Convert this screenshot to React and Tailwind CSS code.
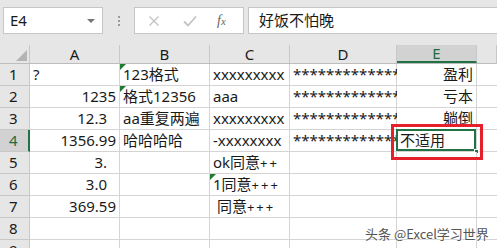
import React from "react";

const F = { fontFamily: '"Noto Sans", "Noto Sans CJK SC", sans-serif' };
const widths = [30, 90, 90, 80, 107, 80, 20];

function Tri() {
  return <div className="absolute left-0 top-0 w-0 h-0 border-t-[6px] border-r-[6px] border-t-[#1e7b34] border-r-transparent" />;
}

function Plus({ n }) {
  return <span className="tracking-[2px] text-[13px]">{"+".repeat(n)}</span>;
}

const rows = [
  [{ t: "?", a: "l" }, { t: "123格式", a: "l", tri: true }, { t: "xxxxxxxxx", a: "l" }, { t: "**************", a: "l" }, { t: "盈利", a: "r" }],
  [{ t: "1235", a: "r" }, { t: "格式12356", a: "l", tri: true }, { t: "aaa", a: "l" }, { t: "**************", a: "l" }, { t: "亏本", a: "r" }],
  [{ t: "12.3", a: "r2" }, { t: "aa重复两遍", a: "l" }, { t: "xxxxxxxxx", a: "l" }, { t: "**************", a: "l" }, { t: "躺倒", a: "r" }],
  [{ t: "1356.99", a: "r" }, { t: "哈哈哈哈", a: "l" }, { t: "-xxxxxxxx", a: "l" }, { t: "**************", a: "l" }, { t: "不适用", a: "l", sel: true }],
  [{ t: "3.", a: "r2" }, { t: "" }, { t: <>ok同意<Plus n={2} /></>, a: "l" }, { t: "" }, { t: "" }],
  [{ t: "3.0", a: "r2" }, { t: "" }, { t: <>1同意<Plus n={3} /></>, a: "l", tri: true }, { t: "" }, { t: "" }],
  [{ t: "369.59", a: "r" }, { t: "" }, { t: <>{"\u00a0"}同意<Plus n={3} /></>, a: "l" }, { t: "" }, { t: "" }],
  [{ t: "" }, { t: "" }, { t: "" }, { t: "" }, { t: "" }],
  [{ t: "" }, { t: "" }, { t: "" }, { t: "" }, { t: "" }],
];

export default function App() {
  return (
    <div className="relative w-[497px] h-[248px] overflow-hidden bg-[#e6e6e6] text-[#1a1a1a]" style={F}>
      {/* formula bar */}
      <div className="flex items-start h-[45px] pt-[7px]">
        <div className="ml-[3px] w-[100px] h-[27px] bg-white border border-[#c6c6c6] flex items-center justify-between pl-[6px] pr-[7px]">
          <span className="text-[15px] leading-none">E4</span>
          <div className="w-0 h-0 border-l-[4px] border-r-[4px] border-t-[4px] border-l-transparent border-r-transparent border-t-[#777]" />
        </div>
        <div className="w-[31px] h-[27px] flex flex-col items-center justify-center gap-[2px]">
          <div className="w-[2px] h-[2px] bg-[#9a9a9a]" />
          <div className="w-[2px] h-[2px] bg-[#9a9a9a]" />
          <div className="w-[2px] h-[2px] bg-[#9a9a9a]" />
        </div>
        <div className="w-[110px] h-[27px] bg-white border border-[#c6c6c6] flex items-center">
          <svg className="ml-[13px]" width="12" height="12" viewBox="0 0 12 12"><path d="M1.5 1.5 L10.5 10.5 M10.5 1.5 L1.5 10.5" stroke="#c4c4c4" strokeWidth="1.4" /></svg>
          <svg className="ml-[23px]" width="14" height="12" viewBox="0 0 14 12"><path d="M1 6.5 L5 10.5 L13 1.5" stroke="#c4c4c4" strokeWidth="1.8" fill="none" /></svg>
          <span className="ml-[20px] text-[14px] italic text-[#666]" style={{ fontFamily: '"Liberation Serif", serif' }}>f<span className="text-[11px]">x</span></span>
        </div>
        <div className="ml-[4px] flex-1 h-[27px] bg-white border border-[#c6c6c6] border-r-0 flex items-center pl-[10px]">
          <span className="text-[15px] leading-none">好饭不怕晚</span>
        </div>
      </div>
      {/* header row */}
      <div className="flex h-[19px] border-b border-[#bdbdbd]">
        <div className="relative w-[30px] border-r border-[#c8c8c8]">
          <div className="absolute right-[2px] bottom-[2px] w-0 h-0 border-b-[11px] border-l-[11px] border-b-[#b4b4b4] border-l-transparent" />
        </div>
        {["A", "B", "C", "D", "E", ""].map((c, i) => (
          <div
            key={i}
            className={`flex items-center justify-center text-[15px] leading-none border-r border-[#c8c8c8] ${c === "E" ? "bg-[#d2d2d2] text-[#1e6b3f] border-b-2 border-b-[#217346]" : ""}`}
            style={{ width: widths[i + 1] }}
          >
            {c}
          </div>
        ))}
      </div>
      {/* rows */}
      {rows.map((r, ri) => (
        <div key={ri} className="flex h-[22px]">
          <div
            className={`w-[30px] flex items-center pl-[9px] text-[15px] leading-none border-r border-b border-[#c8c8c8] ${ri === 3 ? "bg-[#d2d2d2] text-[#1e6b3f] border-r-2 border-r-[#217346]" : "bg-[#e6e6e6]"}`}
          >
            {ri + 1}
          </div>
          {r.map((c, ci) => (
            <div
              key={ci}
              className={`relative bg-white flex items-center text-[15px] leading-none whitespace-nowrap border-r border-b border-[#d4d4d4] ${c.a === "r" ? "justify-end pr-[3px]" : c.a === "r2" ? "justify-end pr-[12px]" : "justify-start pl-[3px]"}`}
              style={{ width: widths[ci + 1] }}
            >
              {c.tri && <Tri />}
              {c.sel && <div className="absolute left-[-1px] top-[-1px] right-0 bottom-0 border-2 border-[#217346]" />}
              {c.sel && <div className="absolute right-[-3px] bottom-[-3px] w-[5px] h-[5px] bg-[#217346] border border-white" />}
              <span className="relative">{c.t}</span>
            </div>
          ))}
          <div className="flex-1 bg-white border-b border-[#d4d4d4]" />
        </div>
      ))}
      {/* red highlight */}
      <div className="absolute left-[391px] top-[124px] w-[92px] h-[36px] border-[3px] border-[#e5202b]" />
      {/* watermark */}
      <div className="absolute left-[365px] top-[227px] text-[13px] leading-none text-[#555] whitespace-nowrap" style={{ fontFamily: '"Noto Sans CJK SC", sans-serif', textShadow: "0 0 2px #fff, 0 0 2px #fff" }}>
        头条 @Excel学习世界
      </div>
    </div>
  );
}
